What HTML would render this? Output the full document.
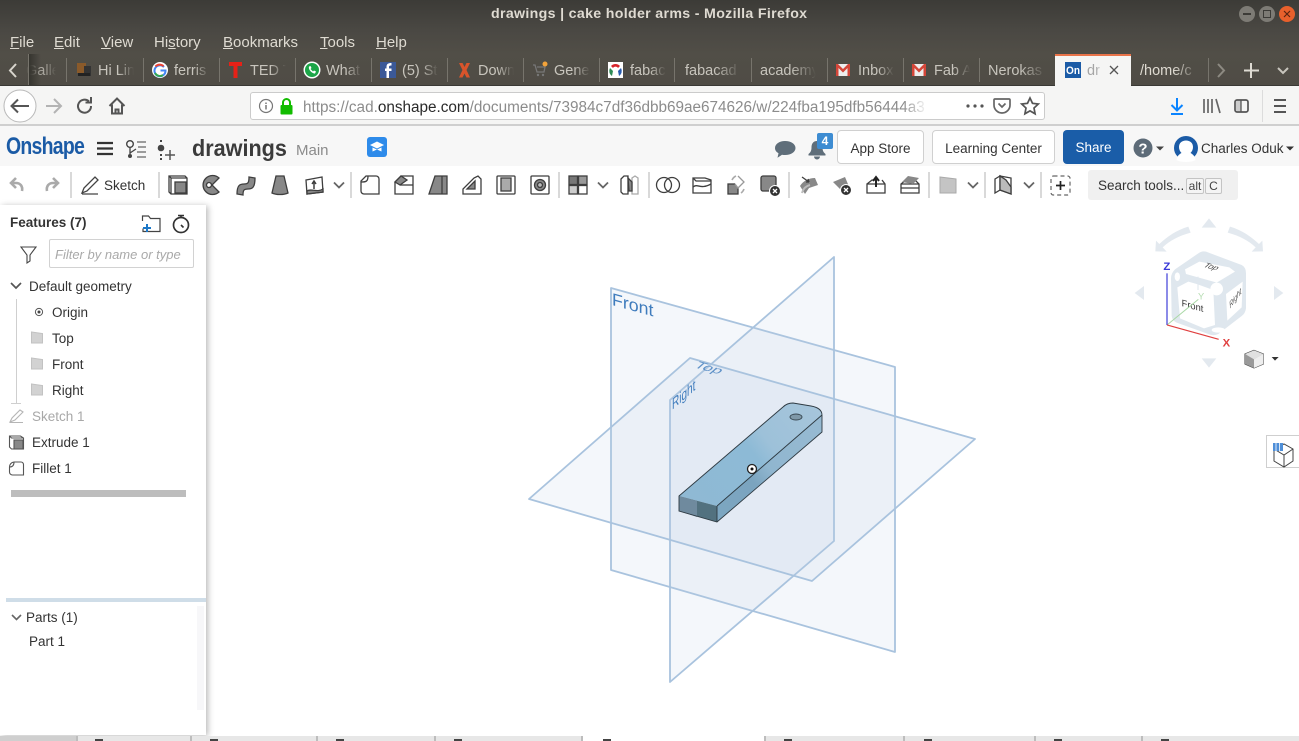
<!DOCTYPE html>
<html><head><meta charset="utf-8"><title>drawings | cake holder arms - Mozilla Firefox</title>
<style>
html,body{margin:0;padding:0;width:1299px;height:741px;overflow:hidden;background:#fff;font-family:"Liberation Sans",sans-serif}
.a{position:absolute;white-space:nowrap}
#bar{left:0;top:0;width:1299px;height:86px;background:linear-gradient(#3c3b37,#4a4843 30px,#514e47 54px,#4f4c45)}
.m{top:34px;font-size:15px;color:#dfdbd2;line-height:17px}
.t{top:63px;font-size:14.5px;color:#c8c5bd;line-height:17px;overflow:hidden;height:18px;-webkit-mask-image:linear-gradient(90deg,#000 55%,transparent);mask-image:linear-gradient(90deg,#000 55%,transparent)}
.s{top:58px;width:1px;height:24px;background:#77746c}
.f{font-size:13.5px;color:#333;line-height:16px}
.btn{top:130px;height:32px;border:1px solid #d0d0d0;border-radius:4px;background:#fff;font-size:13.5px;color:#333;line-height:36px;text-align:center;box-sizing:content-box}
.tk{top:736px;width:2px;height:5px;background:#bdbdbd}
.dk{top:739px;width:8px;height:2px;background:#444}
svg{position:absolute;left:0;top:0}
</style></head><body>
<div class="a" id="bar"></div>
<div class="a" style="left:491px;top:6px;font-size:14.2px;font-weight:bold;color:#dfdbd2;line-height:17px;letter-spacing:.32px">drawings | cake holder arms - Mozilla Firefox</div>
<div class="a m" style="left:10px"><u>F</u>ile</div>
<div class="a m" style="left:54px"><u>E</u>dit</div>
<div class="a m" style="left:101px"><u>V</u>iew</div>
<div class="a m" style="left:154px">Hi<u>s</u>tory</div>
<div class="a m" style="left:223px"><u>B</u>ookmarks</div>
<div class="a m" style="left:320px"><u>T</u>ools</div>
<div class="a m" style="left:376px"><u>H</u>elp</div>

<div class="a t" style="left:26px;width:30px;opacity:.75;-webkit-mask-image:linear-gradient(90deg,transparent,#000 40%,#000 60%,transparent);mask-image:linear-gradient(90deg,transparent,#000 40%,#000 60%,transparent)">Galle</div>
<div class="a t" style="left:98px;width:36px">Hi Lin</div>
<div class="a t" style="left:174px;width:36px">ferris</div>
<div class="a t" style="left:250px;width:36px">TED T</div>
<div class="a t" style="left:326px;width:36px">What</div>
<div class="a t" style="left:402px;width:36px">(5) St</div>
<div class="a t" style="left:478px;width:36px">Down</div>
<div class="a t" style="left:554px;width:36px">Gene</div>
<div class="a t" style="left:630px;width:36px">fabac</div>
<div class="a t" style="left:685px;width:56px">fabacad</div>
<div class="a t" style="left:760px;width:56px">academy</div>
<div class="a t" style="left:858px;width:36px">Inbox</div>
<div class="a t" style="left:934px;width:36px">Fab A</div>
<div class="a t" style="left:988px;width:58px">Nerokas</div>
<div class="a t" style="left:1140px;width:60px;color:#dfdbd2">/home/c</div>
<div class="a s" style="left:66px"></div><div class="a s" style="left:143px"></div><div class="a s" style="left:219px"></div><div class="a s" style="left:295px"></div><div class="a s" style="left:371px"></div><div class="a s" style="left:447px"></div><div class="a s" style="left:523px"></div><div class="a s" style="left:599px"></div><div class="a s" style="left:674px"></div><div class="a s" style="left:751px"></div><div class="a s" style="left:827px"></div><div class="a s" style="left:903px"></div><div class="a s" style="left:979px"></div><div class="a s" style="left:1208px"></div>
<div class="a" style="left:28px;top:54px;width:1px;height:31px;background:#77746c"></div>
<div class="a" style="left:29px;top:54px;width:12px;height:31px;background:linear-gradient(90deg,#36352f,rgba(80,78,71,0))"></div>
<div class="a" style="left:1055px;top:54px;width:76px;height:32px;background:#f5f5f4;border-top:2px solid #e9744a;box-sizing:border-box"></div>
<div class="a t" style="left:1087px;width:16px;color:#a5a5a5">dr</div>

<div class="a" style="left:0;top:85px;width:1299px;height:41px;background:#f5f5f4;border-top:1px solid #3a3935;border-bottom:2px solid #cfcfcf;box-sizing:border-box"></div>
<div class="a" style="left:1055px;top:84px;width:76px;height:3px;background:#f5f5f4"></div>
<div class="a" style="left:250px;top:92px;width:795px;height:28px;background:#fff;border:1px solid #cbcbcb;border-radius:3px;box-sizing:border-box"></div>
<div class="a" style="left:303px;top:99px;width:625px;overflow:hidden;font-size:15.3px;line-height:17px;color:#8c8c8c;-webkit-mask-image:linear-gradient(90deg,#000 96%,transparent);mask-image:linear-gradient(90deg,#000 96%,transparent)">https://cad.<span style="color:#2a2a2a">onshape.com</span>/documents/73984c7df36dbb69ae674626/w/224fba195dfb56444a3</div>

<div class="a" style="left:0;top:126px;width:1299px;height:40px;background:#f7f7f7"></div>
<div class="a" style="left:6px;top:133px;font-size:24px;font-weight:bold;color:#1b5ba6;line-height:28px;letter-spacing:-.9px;transform:scaleX(.81);transform-origin:0 0">Onshape</div>
<div class="a" style="left:192px;top:134px;font-size:23.5px;font-weight:bold;color:#3b3b3b;line-height:28px;transform:scaleX(.92);transform-origin:0 0">drawings</div>
<div class="a" style="left:296px;top:142px;font-size:15px;color:#8b8b8b;line-height:18px">Main</div>
<div class="a btn" style="left:837px;width:85px">App Store</div>
<div class="a btn" style="left:932px;width:121px">Learning Center</div>
<div class="a btn" style="left:1063px;width:61px;height:34px;border:0;background:#1a5da8;color:#fff">Share</div>
<div class="a" style="left:1201px;top:141px;font-size:13.5px;color:#333;line-height:16px">Charles Oduk</div>

<div class="a" style="left:104px;top:178px;font-size:13.5px;color:#333;line-height:16px">Sketch</div>
<div class="a" style="left:1088px;top:170px;width:150px;height:30px;background:#f0f0f0;border-radius:3px"></div>
<div class="a" style="left:1098px;top:178px;font-size:13.5px;color:#333;line-height:16px">Search tools...</div>
<div class="a" style="left:1186px;top:178px;width:18px;height:16px;border:1px solid #c4c4c4;border-radius:2px;background:#f4f4f4;box-sizing:border-box;font-size:12px;text-align:center;line-height:15px;color:#444">alt</div>
<div class="a" style="left:1205px;top:178px;width:17px;height:16px;border:1px solid #c4c4c4;border-radius:2px;background:#f4f4f4;box-sizing:border-box;font-size:12px;text-align:center;line-height:15px;color:#444">C</div>

<div class="a" style="left:0;top:205px;width:206px;height:530px;background:#fff;box-shadow:2px 1px 6px rgba(0,0,0,.28)"></div>
<div class="a" style="left:10px;top:215px;font-size:13.5px;font-weight:bold;color:#333;line-height:16px">Features (7)</div>
<div class="a" style="left:49px;top:239px;width:145px;height:29px;border:1px solid #d2d2d2;border-radius:2px;box-sizing:border-box;font-size:13px;font-style:italic;color:#a9a9a9;line-height:29px;padding-left:5px">Filter by name or type</div>
<div class="a f" style="left:29px;top:279px">Default geometry</div>
<div class="a f" style="left:52px;top:305px">Origin</div>
<div class="a f" style="left:52px;top:331px">Top</div>
<div class="a f" style="left:52px;top:357px">Front</div>
<div class="a f" style="left:52px;top:383px">Right</div>
<div class="a f" style="left:32px;top:409px;color:#a8a8a8">Sketch 1</div>
<div class="a f" style="left:32px;top:435px">Extrude 1</div>
<div class="a f" style="left:32px;top:461px">Fillet 1</div>
<div class="a" style="left:11px;top:490px;width:175px;height:7px;background:#bdbdbd"></div>
<div class="a" style="left:16px;top:299px;width:1px;height:104px;background:#cfcfcf"></div>
<div class="a" style="left:11px;top:403px;width:10px;height:1px;background:#cfcfcf"></div>
<div class="a" style="left:6px;top:598px;width:200px;height:4px;background:#cfdde8"></div>
<div class="a" style="left:197px;top:606px;width:7px;height:104px;background:#f7f7f9"></div>
<div class="a f" style="left:26px;top:610px">Parts (1)</div>
<div class="a f" style="left:29px;top:634px">Part 1</div>

<div class="a" style="left:0;top:736px;width:76px;height:5px;background:#cfcfcf"></div>
<div class="a" style="left:76px;top:736px;width:506px;height:5px;background:#e7e7e7"></div>
<div class="a" style="left:764px;top:736px;width:535px;height:5px;background:#e7e7e7"></div>
<div class="a tk" style="left:76px"></div><div class="a tk" style="left:190px"></div><div class="a tk" style="left:316px"></div><div class="a tk" style="left:434px"></div><div class="a tk" style="left:581px"></div><div class="a tk" style="left:764px"></div><div class="a tk" style="left:903px"></div><div class="a tk" style="left:1034px"></div><div class="a tk" style="left:1141px"></div>
<div class="a dk" style="left:95px"></div><div class="a dk" style="left:210px"></div><div class="a dk" style="left:336px"></div><div class="a dk" style="left:454px"></div><div class="a dk" style="left:603px"></div><div class="a dk" style="left:784px"></div><div class="a dk" style="left:924px"></div><div class="a dk" style="left:1054px"></div><div class="a dk" style="left:1161px"></div>

<div class="a" style="left:1266px;top:435px;width:33px;height:33px;background:#fff;border:1px solid #cfcfcf;border-right:0;box-sizing:border-box"></div>

<svg width="1299" height="741" viewBox="0 0 1299 741" font-family="Liberation Sans, sans-serif">
<!-- window buttons -->
<circle cx="1247" cy="14" r="8" fill="#7d7b75"/><rect x="1243" y="13" width="8" height="2" fill="#3c3b37"/>
<circle cx="1267" cy="14" r="8" fill="#7d7b75"/><rect x="1263.5" y="10.5" width="7" height="7" fill="none" stroke="#3c3b37"/>
<circle cx="1287" cy="14" r="8" fill="#e8602c"/><path d="M1284 11l6 6m0-6l-6 6" stroke="#5a2411" stroke-width="1.2"/>
<!-- tab strip icons -->
<path d="M16 64l-6 6.500 6 6.500" fill="none" stroke="#d8d5cd" stroke-width="2"/>
<path d="M1218 64l6 6.500-6 6.500" fill="none" stroke="#8d8a82" stroke-width="2"/>
<path d="M1251 63v15M1244 70.500h15" stroke="#dedbd3" stroke-width="2"/>
<path d="M1278 68l5 5 5-5" fill="none" stroke="#c8c5bd" stroke-width="2"/>
<path d="M1110 66l8 8m0-8l-8 8" stroke="#555" stroke-width="1.300"/>
<g><rect x="77" y="63" width="9" height="10" fill="#8a5a2a"/><rect x="84" y="66" width="7" height="10" fill="#333"/><rect x="78" y="73" width="12" height="3" fill="#222"/></g>
<circle cx="160" cy="70" r="8" fill="#fff"/><path d="M164 67a5.500 5.500 0 1 0 1.500 3.500h-5" fill="none" stroke="#4285f4" stroke-width="2"/><path d="M155.500 66.500a5.500 5.500 0 0 1 8-0.300" fill="none" stroke="#ea4335" stroke-width="2"/><path d="M155 73a5.500 5.500 0 0 0 8 2" fill="none" stroke="#34a853" stroke-width="2"/>
<path d="M229 62h13v4h-4.500v12h-4v-12H229z" fill="#e62117"/>
<circle cx="312" cy="70" r="8.500" fill="#fff"/><circle cx="312" cy="70" r="7" fill="#1ca548"/><path d="M309 66.500c-1 3 3 7 6 7l1-2-2-1-1 1-2.500-2.500 1-1-1-2z" fill="#fff"/>
<rect x="380" y="62" width="16" height="16" fill="#3b5998"/><path d="M389 78v-7h2.500v-2.500H389V67c0-1 .5-1.500 2.500-1.500V63c-3.500 0-5 1-5 4v1.500H385V71h1.500v7z" fill="#fff"/>
<path d="M459 63h3.500l2 4 2-4h3.500l-3.500 7 3.500 7.500h-3.500l-2-4-2 4H459l3.500-7.500z" fill="#d9542b"/>
<path d="M533 65h2l2 7h7l1-5h-8" fill="none" stroke="#777" stroke-width="1.300"/><circle cx="538" cy="75" r="1.200" fill="#777"/><circle cx="543" cy="75" r="1.200" fill="#777"/><circle cx="545" cy="64" r="2.500" fill="#f2a33a"/>
<rect x="608" y="62" width="15" height="16" fill="#fff"/><path d="M611 66a6 6 0 0 1 9 0l-2 2a3 3 0 0 0-5 0z" fill="#d7262c"/><path d="M610 68l3 3-1 5a6 6 0 0 1-2-8z" fill="#2e8b57"/><path d="M621 68l-3 3 1 5a6 6 0 0 0 2-8z" fill="#2a5db0"/>
<rect x="836" y="64" width="14" height="12" fill="#eee"/><path d="M836 64h2l5 5 5-5h2v12h-2.500v-8l-4.500 4.500-4.500-4.500v8H836z" fill="#d44639"/>
<rect x="912" y="64" width="14" height="12" fill="#eee"/><path d="M912 64h2l5 5 5-5h2v12h-2.500v-8l-4.500 4.500-4.500-4.500v8H912z" fill="#d44639"/>
<rect x="1065" y="62" width="16" height="16" fill="#1b5ba6"/><text x="1066" y="74" font-size="11" font-weight="bold" fill="#fff" textLength="14" lengthAdjust="spacingAndGlyphs">On</text>
<!-- nav -->
<circle cx="20" cy="106" r="16" fill="#fff" stroke="#b9b9b9"/>
<path d="M29 106H12M18 99.500L11.500 106l6.500 6.500" fill="none" stroke="#555" stroke-width="2"/>
<path d="M61 106H46M54 99l7 7-7 7" fill="none" stroke="#b3b3b3" stroke-width="2"/>
<path d="M91 106a6.500 6.500 0 1 1-2-4.500M91 97v5.500h-5.500" fill="none" stroke="#555" stroke-width="2"/>
<path d="M109.500 106l7.500-7.500 7.500 7.500M112 104.500v9h10v-9M115.500 113.500v-4h3v4" fill="none" stroke="#555" stroke-width="2"/>
<circle cx="266" cy="106" r="6.500" fill="none" stroke="#777" stroke-width="1.200"/><path d="M266 105v4.500M266 102.500v1.500" stroke="#777" stroke-width="1.500"/>
<rect x="280.500" y="105" width="12" height="9.500" rx="1" fill="#12bc00"/><path d="M283 105v-2.500a3.500 3.500 0 0 1 7 0v2.500" fill="none" stroke="#12bc00" stroke-width="2"/>
<circle cx="968" cy="106" r="1.600" fill="#555"/><circle cx="975" cy="106" r="1.600" fill="#555"/><circle cx="982" cy="106" r="1.600" fill="#555"/>
<path d="M995 99h14a1 1 0 0 1 1 1v5a8 8 0 0 1-16 0v-5a1 1 0 0 1 1-1z" fill="none" stroke="#666" stroke-width="1.700"/><path d="M998.500 103.500l3.500 3.500 3.500-3.500" fill="none" stroke="#666" stroke-width="1.700"/>
<path d="M1030 98l2.500 5.300 5.800.7-4.300 4 1.100 5.800-5.100-2.900-5.100 2.900 1.100-5.800-4.300-4 5.800-.7z" fill="none" stroke="#555" stroke-width="1.700"/>
<path d="M1177 98v12M1171.500 105l5.500 5.500 5.500-5.500" fill="none" stroke="#0a84ff" stroke-width="2"/><rect x="1171" y="113" width="12" height="2" fill="#0a84ff"/>
<path d="M1204 99v14M1208 99v14M1212 99v14M1216 99l4 14" fill="none" stroke="#666" stroke-width="1.700"/>
<rect x="1235" y="100" width="13" height="12" rx="2" fill="none" stroke="#555" stroke-width="1.700"/><rect x="1236" y="101" width="5" height="10" fill="#ccc"/><path d="M1241 100v12" stroke="#555" stroke-width="1.300"/>
<rect x="1262" y="90" width="1" height="32" fill="#dcdcdc"/>
<path d="M1274 100h12M1274 106h12M1274 112h12" stroke="#555" stroke-width="2"/>
<!-- header icons -->
<path d="M97 143h16M97 148.500h16M97 154h16" stroke="#333" stroke-width="2.300"/>
<circle cx="130" cy="144" r="3.300" fill="none" stroke="#444" stroke-width="1.400"/><circle cx="130" cy="156" r="2" fill="#444"/><path d="M130 147v7M130 153l6-4" fill="none" stroke="#444" stroke-width="1.300"/><path d="M137 142h9M138 147h8M137 152h9M137 157h9" stroke="#666" stroke-width="1.300"/>
<circle cx="161" cy="148" r="3.300" fill="#444"/><path d="M161 140v2M161 154v2M161 158v2" stroke="#444" stroke-width="2"/><path d="M165 155h10M170 150v10" stroke="#555" stroke-width="1.500"/>
<rect x="367" y="137" width="20" height="20" rx="3" fill="#2e8bea"/><path d="M370 145l7-3.500 7 3.500-7 3.500zM372.500 147.500v4l4.500-2 4.500 2v-4l-4.500 2z" fill="#fff"/>
<path d="M785 141c6 0 10.500 3 10.500 7s-4.500 7-10.500 7c-1 0-2 0-3-.300l-4.500 3 1-4.500c-2.500-1.300-3.500-3.200-3.500-5.200 0-4 4.500-7 10-7z" fill="#5f6e7a"/>
<path d="M817 141c-4 0-5.500 3-5.500 6.500 0 3-1 5-3 6.500v1.500h17V154c-2-1.500-3-3.500-3-6.500 0-3.500-1.500-6.500-5.500-6.500zM814 156.500a3 3 0 0 0 6 0z" fill="#5f6e7a"/>
<rect x="817" y="133" width="16" height="16" rx="2" fill="#3d8cd2"/><text x="825" y="145" font-size="12" font-weight="bold" fill="#fff" text-anchor="middle">4</text>
<circle cx="1143" cy="148" r="9.500" fill="#5d6b78"/><text x="1143" y="153.500" font-size="15" font-weight="bold" fill="#fff" text-anchor="middle">?</text>
<path d="M1156 146.500h8l-4 4z" fill="#444"/>
<circle cx="1186" cy="148" r="12" fill="#1b5ba6"/><path d="M1176.500 160c.5-4 3-6 5-7-1.500-1.500-2.500-3.500-2.500-6 0-4 3-6.500 7-6.500s7 2.500 7 6.500c0 2.500-1 4.500-2.500 6 2 1 4.500 3 5 7-2.500 1.500-6 2-9.500 2s-7-.5-9.500-2z" fill="#fff"/>
<path d="M1286 146.500h8l-4 4z" fill="#333"/>
<!-- toolbar separators -->
<g fill="#d9d9d9"><rect x="70" y="172" width="2" height="26"/><rect x="158" y="172" width="2" height="26"/><rect x="350" y="172" width="2" height="26"/><rect x="558" y="172" width="2" height="26"/><rect x="648" y="172" width="2" height="26"/><rect x="788" y="172" width="2" height="26"/><rect x="928" y="172" width="2" height="26"/><rect x="984" y="172" width="2" height="26"/><rect x="1040" y="172" width="2" height="26"/></g>
<path d="M22 191c1-5-2-8-6-8h-4M16 178l-5 5 5 5" fill="none" stroke="#aaa" stroke-width="2.600"/>
<path d="M47 191c-1-5 2-8 6-8h4M53 178l5 5-5 5" fill="none" stroke="#aaa" stroke-width="2.600"/>
<path d="M82 193l2-5 11-11 3 3-11 11-5 2zM82 194h16" fill="none" stroke="#444" stroke-width="1.300"/>
<g fill="none" stroke="#3e3e3e" stroke-width="1.300">
<g transform="translate(178,185)"><path d="M-9-9H7l2 2V9H-7l-2-2z" fill="#fff"/><path d="M-9-9l2 2H9M-7-7V9" /><rect x="-3" y="-3" width="11" height="11" fill="#888"/></g>
<g transform="translate(212,185)"><path d="M7-7A9.500 9.500 0 1 0 7 7L0 0z" fill="#888"/><circle cx="-3" cy="0" r="2.500" fill="#fff"/></g>
<g transform="translate(246,185)"><path d="M-9 9c0-9 3-10 7-10s5-1 5-7l6 1c0 10-3 11-7 11s-5 1-5 6z" fill="#888"/></g>
<g transform="translate(280,185)"><path d="M-4-9H4L8 8c-4 2-12 2-16 0z" fill="#888"/></g>
<g transform="translate(314,185)"><path d="M-8-5L8-8 9 7-7 9z" fill="#fff"/><path d="M-7 6c4-3 10 2 16-2v3L-7 9z" fill="#888"/><path d="M0 4v-7M-2-1l2-3 2 3" stroke-width="1.500"/></g>
<g transform="translate(370,185)"><path d="M-4-9H6a3 3 0 0 1 3 3V9H-6a3 3 0 0 1-3-3V-4z" fill="#fff"/><path d="M-9-3c3 0 5 0 6-1.500s1-3.500 1-4.500" /></g>
<g transform="translate(404,185)"><path d="M-3-9H9V9H-9V-3z" fill="#fff"/><path d="M-9-3L-3-9 3-5-4 0z" fill="#888"/><path d="M-4 0H9"/></g>
<g transform="translate(438,185)"><path d="M-3-9H9V9H-9z" fill="#888"/><path d="M4-9V9"/></g>
<g transform="translate(472,185)"><path d="M-9 9V4L2-7l4-2 3 3V9z" fill="#fff"/><path d="M-5 4L3-4V4z" fill="#888"/></g>
<g transform="translate(506,185)"><rect x="-9" y="-9" width="18" height="18" rx="1" fill="#fff"/><rect x="-5" y="-7" width="10" height="13" fill="#aaa"/></g>
<g transform="translate(540,185)"><rect x="-9" y="-9" width="18" height="18" rx="1" fill="#fff"/><circle r="5.500" fill="#888"/><circle r="2.500" fill="#bbb"/></g>
<g transform="translate(578,185)"><rect x="-9" y="-9" width="8.500" height="8.500" fill="#777"/><rect x="0.500" y="-9" width="8.500" height="8.500" fill="#999"/><rect x="-9" y="0.500" width="8.500" height="8.500" fill="#ccc"/><rect x="0.500" y="0.500" width="8.500" height="8.500" fill="#fff"/></g>
<g transform="translate(630,185)"><path d="M-9-6l3-3h4V9h-5l-2-2z" fill="#fff"/><path d="M2 9V-7l3-2 3 2V9z" fill="#fff" stroke="#aaa"/><path d="M-2-7l4 4V6h-3z" fill="#888"/></g>
<g transform="translate(668,185)"><circle cx="-4" r="7.500" fill="#fff"/><circle cx="4" r="7.500" fill="none"/></g>
<g transform="translate(702,185)"><path d="M-9-7h12l6 2V8H-9z" fill="#fff"/><path d="M-9 2c5-4 7 3 18-3"/><path d="M-9-7l3 3H9"/></g>
<g transform="translate(736,185)"><rect x="-8" y="-1" width="10" height="10" fill="#888"/><path d="M2-9l6 6-6 6-3-4" stroke="#999" fill="#fff"/><path d="M-4-5a8 8 0 0 1 4-4M5 8a8 8 0 0 0 3-4" stroke="#aaa" stroke-width="1.600"/></g>
<g transform="translate(770,185)"><rect x="-9" y="-9" width="15" height="15" rx="2" fill="#888"/></g>
<g transform="translate(809,185)"><path d="M-9 1c3-5 9-8 15-8l3 7-9 3-4 6z" fill="#888" stroke="none"/><path d="M-7-8L0-3M0-3l-1-3M0-3l-3 0"/><path d="M-7 8c1-4 4-7 8-8" stroke="#bbb" stroke-width="2"/></g>
<g transform="translate(842,185)"><path d="M-9-3L3-8 8 4 0 6z" fill="#888" stroke="none"/></g>
<g transform="translate(876,185)"><path d="M-9-1l5-4h4M6-5l3 4V8H-9V-1H9" fill="#fff"/><path d="M0 2v-10M-3-4l3-4 3 4" stroke-width="2" stroke="#222"/></g>
<g transform="translate(910,185)"><path d="M-9-1l5-4H5l4 4V8H-9z" fill="#fff"/><path d="M-9-1H9M-9 3H9"/><path d="M-8-3L-2-9 9-7 3-1z" fill="#888" stroke="none"/></g>
<g transform="translate(948,185)"><path d="M-8-8L8-6V8H-8z" fill="#c4c4c4" stroke="#aaa" stroke-width="1"/></g>
<g transform="translate(1003,185)"><path d="M-8-6l5-3V5l-5 3zM-3-9L8-7V9L-3 5z" fill="#fff"/><path d="M-3 5V-9L3-5 8 2V9z" fill="#bbb"/></g>
</g>
<circle cx="775" cy="191" r="5.500" fill="#333" stroke="#fff"/><path d="M773 189l4 4m0-4l-4 4" stroke="#fff" stroke-width="1.300"/>
<circle cx="846" cy="190" r="5.500" fill="#333" stroke="#fff"/><path d="M844 188l4 4m0-4l-4 4" stroke="#fff" stroke-width="1.300"/>
<g fill="none" stroke="#666" stroke-width="1.800">
<path d="M334 182.500l5 5 5-5M598 182.500l5 5 5-5M968 182.500l5 5 5-5M1024 182.500l5 5 5-5"/></g>
<rect x="1051" y="176" width="19" height="19" rx="2.500" fill="none" stroke="#666" stroke-width="1.200" stroke-dasharray="4 3"/>
<path d="M1060.500 181v9M1056 185.500h9" stroke="#222" stroke-width="1.700"/>
<!-- left panel icons -->
<path d="M142.500 221v-5h6l2 2.500h9.500v13h-17v-3" fill="none" stroke="#444" stroke-width="1.200"/><path d="M147 224v8M143 228h8" stroke="#1c78c8" stroke-width="2"/>
<circle cx="181" cy="225" r="7.500" fill="none" stroke="#333" stroke-width="1.700"/><path d="M178 215.500h6M181 216v2M181 225l2.500 2.500" stroke="#333" stroke-width="1.600"/>
<path d="M21 247h15l-6 8v6l-3 2v-8z" fill="none" stroke="#444" stroke-width="1.100"/>
<path d="M11 283l5 5 5-5" fill="none" stroke="#555" stroke-width="1.700"/>
<circle cx="39" cy="312" r="3.600" fill="none" stroke="#555" stroke-width="1"/><circle cx="39" cy="312" r="1.500" fill="#444"/>
<g fill="#d2d2d2" stroke="#c2c2c2"><path d="M31.500 332l11 1.500v9.500h-11z"/><path d="M31.500 358l11 1.500v9.500h-11z"/><path d="M31.500 384l11 1.500v9.500h-11z"/></g>
<path d="M10 422l2-4 8-8 3 2-8 8-5 2zM10 422.500h13" fill="none" stroke="#b5b5b5" stroke-width="1.100"/>
<g fill="none" stroke="#555" stroke-width="1.100"><path d="M9.500 436h11l3 2v11h-12l-2-2z" fill="#fff"/><rect x="14" y="440" width="9" height="9" fill="#888"/><path d="M9.500 436l2 2h12"/><path d="M14 462h7a2.500 2.500 0 0 1 2.500 2.500V475h-11a3 3 0 0 1-3-3v-5a5 5 0 0 1 4.500-5z" fill="#fff"/><path d="M9.500 467c3 0 4.500-2 4.500-5"/></g>
<path d="M12 615l4.500 4.500 4.500-4.500" fill="none" stroke="#666" stroke-width="1.600"/>
<!-- planes -->
<g stroke="#a9c3de" stroke-width="1.800" stroke-linejoin="round">
<path d="M611 288L895 367V652L611 570Z" fill="rgba(190,210,232,.17)"/>
<path d="M670 400L834 257V541L670 682Z" fill="rgba(190,210,232,.17)"/>
<path d="M690 358L975 439L812 581L529 499Z" fill="rgba(190,210,232,.17)"/>
</g>
<g fill="#3f7cbd">
<text transform="matrix(.963,.268,0,1,612,305)" font-size="17.500" textLength="43" lengthAdjust="spacingAndGlyphs">Front</text>
<text transform="matrix(.754,-.657,0,1,672,410)" font-size="15.500" textLength="31" lengthAdjust="spacingAndGlyphs">Right</text>
<text transform="matrix(.96,.27,-.75,.66,693,367)" font-size="12.500" textLength="27" lengthAdjust="spacingAndGlyphs" fill-opacity=".8">Top</text>
</g>
<!-- part -->
<defs>
<linearGradient id="tp" gradientUnits="userSpaceOnUse" x1="690" y1="500" x2="815" y2="405"><stop offset="0" stop-color="#8fb9d4"/><stop offset=".5" stop-color="#8dbad6"/><stop offset=".62" stop-color="#9dc1d9"/><stop offset="1" stop-color="#a6c5db"/></linearGradient>
<linearGradient id="sd" gradientUnits="userSpaceOnUse" x1="717" y1="514" x2="822" y2="424"><stop offset="0" stop-color="#7ca6c1"/><stop offset=".35" stop-color="#7ba4bf"/><stop offset=".5" stop-color="#90b6cf"/><stop offset="1" stop-color="#97bad2"/></linearGradient>
</defs>
<path d="M679 496L783 407Q787 403 793 403L811 406Q822 408 822 415L717 506Z" fill="url(#tp)"/>
<path d="M717 506L822 415V432L717 522Z" fill="url(#sd)"/>
<path d="M679 496L717 506V522L679 511Z" fill="#52717f"/>
<path d="M679 496L697 501V517L679 511Z" fill="#6f8a9e"/>
<path d="M679 496L783 407Q787 403 793 403L811 406Q822 408 822 415V432L717 522L679 511ZM717 506V522M717 506L822 415" fill="none" stroke="#2e3a42" stroke-width=".9"/>
<ellipse cx="796" cy="417" rx="6" ry="3" fill="#7f98a8" stroke="#3a4a54" stroke-width=".9"/>
<circle cx="752" cy="469" r="4.500" fill="#fff" stroke="#222" stroke-width="1.300"/><circle cx="752" cy="469" r="1.500" fill="#111"/>
<!-- view cube -->
<g transform="translate(1120,210) scale(.33333)">
<g fill="#e3e9ef">
<path d="M267 25L245 53H289ZM245 445H289L267 473ZM72 228V270L44 249ZM462 228V270L490 249Z"/>
<path d="M205 50L212 68C175 78 150 92 128 112L140 125L106 124L108 92L118 102C142 80 170 60 205 50Z"/>
<path d="M330 50L323 68C360 78 385 92 407 112L395 125L429 124L427 92L417 102C393 80 365 60 330 50Z"/>
</g>
<path d="M258 125L365 165Q378 172 378 190L378 295Q376 310 365 318L295 372Q282 378 270 374L170 338Q157 332 155 318L153 205Q153 190 165 178L235 130Q246 122 258 125Z" fill="#dfe7ee"/>
<path d="M195 178L238 155L328 172L345 185L290 218L280 215L198 192Z" fill="#fff"/>
<path d="M172 232L205 215L230 222L280 240L285 345L252 355L180 325Z" fill="#fff"/>
<path d="M318 252L368 215L365 292L322 332Z" fill="#fff"/>
<circle cx="290" cy="237" r="19" fill="#fff"/><ellipse cx="172" cy="200" rx="8" ry="13" fill="#fff"/><ellipse cx="295" cy="360" rx="20" ry="8" fill="#fff"/>
<path d="M234 200V240M285 280L315 290" stroke="#dfe7ee" stroke-width="3"/>
<text transform="matrix(.96,.27,-.75,.66,248,170)" font-size="26" fill="#444">Top</text>
<text transform="matrix(.96,.27,0,1,185,288)" font-size="29" fill="#333">Front</text>
<text transform="matrix(.6,-.8,.2,1,330,296)" font-size="25" fill="#555" font-style="italic">Right</text>
<path d="M141 345L235 268" stroke="#a9d8a5" stroke-width="3"/>
<text x="234" y="268" font-size="28" fill="#b4dcb0">Y</text>
<path d="M141 190V345" stroke="#3838d8" stroke-width="3.500"/>
<path d="M141 345L296 388" stroke="#e04040" stroke-width="3.500"/>
<text x="130" y="180" font-size="34" font-weight="bold" fill="#3838d8">Z</text>
<text x="308" y="409" font-size="34" font-weight="bold" fill="#e04040">X</text>
<path d="M402 421L430 432V462L402 474L375 462V432Z" fill="#c9c9c9" stroke="#444" stroke-width="3"/>
<path d="M402 448L430 432V462L402 474Z" fill="#eee"/><path d="M375 432L402 421L430 432L402 448Z" fill="#e0e0e0"/><path d="M375 432L402 448V474L375 462Z" fill="#999"/>
<path d="M455 441H476L465 452Z" fill="#333"/>
</g>
<!-- right tool -->
<g transform="translate(1250,425)">
<path d="M24 24L34 19L43 24V36L34 42L24 36ZM24 24L34 30L43 24M34 30V42" fill="#fff" stroke="#444" stroke-width="1"/>
<rect x="23" y="18" width="10" height="8" fill="#4f8fd8"/><path d="M26 18v8M29.500 18v8" stroke="#fff" stroke-width=".8"/>
</g>
</svg>
</body></html>
